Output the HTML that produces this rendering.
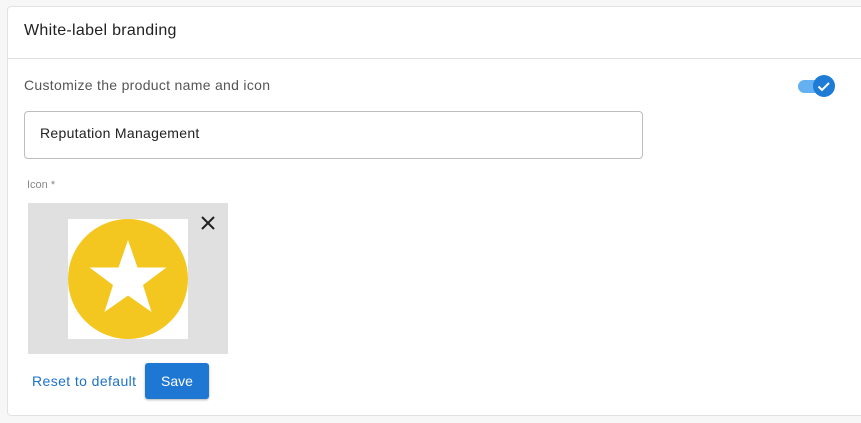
<!DOCTYPE html>
<html><head><style>
body{margin:0;width:861px;height:423px;background:#f7f7f7;font-family:"Liberation Sans",sans-serif;position:relative;overflow:hidden}
.card{position:absolute;left:7px;top:6px;width:870px;height:408px;background:#fff;border:1px solid #e2e2e2;border-radius:4px}
.a{position:absolute}
</style></head><body>
<div class="card"></div>
<div class="a" style="left:24px;top:22px;font-size:16px;color:#212121;letter-spacing:0.3px">White-label branding</div>
<div class="a" style="left:8px;top:58px;width:853px;height:1px;background:#e0e0e0"></div>
<div class="a" style="left:24px;top:77px;font-size:14px;color:#555;letter-spacing:0.3px">Customize the product name and icon</div>
<svg class="a" style="left:794px;top:72px" width="42" height="28">
<rect x="4" y="8" width="30" height="13" rx="6.5" fill="#64b0f0"/>
<circle cx="30" cy="14" r="11" fill="#1e7bd6"/>
<path d="M24.5 14.5l3.5 3.5 7-7" stroke="#fff" stroke-width="2" fill="none"/>
</svg>
<div class="a" style="left:24px;top:111px;width:617px;height:46px;border:1px solid #bdbdbd;border-radius:4px"></div>
<div class="a" style="left:40px;top:125px;font-size:14px;color:#212121;letter-spacing:0.3px">Reputation Management</div>
<div class="a" style="left:27px;top:179px;font-size:11px;color:#888">Icon *</div>
<div class="a" style="left:28px;top:203px;width:200px;height:151px;background:#e0e0e0"></div>
<svg class="a" style="left:68px;top:219px" width="120" height="120">
<rect width="120" height="120" fill="#fff"/>
<circle cx="60" cy="60" r="60" fill="#f4c720"/>
<polygon points="60,21 69.5,48.5 98.5,48.5 75,66 83.5,93 60,76.5 36.5,93 45,66 21.5,48.5 50.5,48.5" fill="#fff"/>
</svg>
<svg class="a" style="left:200px;top:215px" width="16" height="16"><path d="M2 2L14 14M14 2L2 14" stroke="#222" stroke-width="2"/></svg>
<div class="a" style="left:32px;top:373px;font-size:14px;color:#1e72c8;letter-spacing:0.4px;font-weight:500">Reset to default</div>
<div class="a" style="left:145px;top:363px;width:64px;height:36px;background:#1e77d3;border-radius:3px;box-shadow:0 1px 2px rgba(0,0,0,.3);color:#fff;font-size:14px;text-align:center;line-height:36px">Save</div>
</body></html>
